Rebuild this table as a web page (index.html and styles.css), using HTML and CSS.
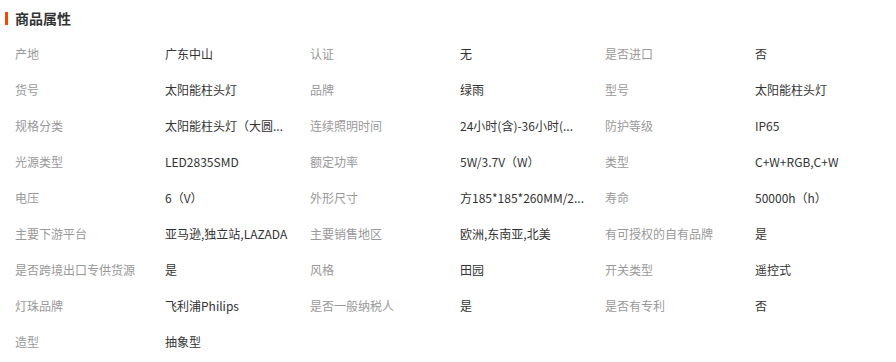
FILE: index.html
```html
<!DOCTYPE html>
<html lang="zh">
<head>
<meta charset="utf-8">
<link rel="stylesheet" href="styles.css">
</head>
<body>
<div class="attrs">
  <h3 class="attrs-title">商品属性</h3>
  <div class="attrs-grid">
    <div class="k">产地</div><div class="v">广东中山</div>
    <div class="k">认证</div><div class="v">无</div>
    <div class="k">是否进口</div><div class="v">否</div>

    <div class="k">货号</div><div class="v">太阳能柱头灯</div>
    <div class="k">品牌</div><div class="v">绿雨</div>
    <div class="k">型号</div><div class="v">太阳能柱头灯</div>

    <div class="k">规格分类</div><div class="v">太阳能柱头灯（大圆...</div>
    <div class="k">连续照明时间</div><div class="v">24小时(含)-36小时(...</div>
    <div class="k">防护等级</div><div class="v">IP65</div>

    <div class="k">光源类型</div><div class="v">LED2835SMD</div>
    <div class="k">额定功率</div><div class="v">5W/3.7V（W）</div>
    <div class="k">类型</div><div class="v">C+W+RGB,C+W</div>

    <div class="k">电压</div><div class="v">6（V）</div>
    <div class="k">外形尺寸</div><div class="v">方185*185*260MM/2...</div>
    <div class="k">寿命</div><div class="v">50000h（h）</div>

    <div class="k">主要下游平台</div><div class="v">亚马逊,独立站,LAZADA</div>
    <div class="k">主要销售地区</div><div class="v">欧洲,东南亚,北美</div>
    <div class="k">有可授权的自有品牌</div><div class="v">是</div>

    <div class="k">是否跨境出口专供货源</div><div class="v">是</div>
    <div class="k">风格</div><div class="v">田园</div>
    <div class="k">开关类型</div><div class="v">遥控式</div>

    <div class="k">灯珠品牌</div><div class="v">飞利浦Philips</div>
    <div class="k">是否一般纳税人</div><div class="v">是</div>
    <div class="k">是否有专利</div><div class="v">否</div>

    <div class="k">造型</div><div class="v">抽象型</div>
  </div>
</div>
</body>
</html>
```

FILE: styles.css
```css
* { box-sizing: border-box; }
html, body {
  margin: 0;
  padding: 0;
  background: #fff;
}
body {
  font-family: "Noto Sans CJK SC", "Noto Sans", "Liberation Sans", sans-serif;
  font-size: 12px;
  color: #333;
}
.attrs {
  width: 896px;
}
.attrs-title {
  position: relative;
  margin: 0;
  height: 36px;
  line-height: 37px;
  padding-left: 15px;
  font-size: 14px;
  font-weight: bold;
  color: #333;
}
.attrs-title::before {
  content: "";
  position: absolute;
  left: 5px;
  top: 12px;
  width: 3px;
  height: 13px;
  background: #ff4400;
}
.attrs-grid {
  display: grid;
  grid-template-columns: 150px 145px 150px 145px 150px 141px;
  grid-auto-rows: 36px;
  padding-left: 15px;
}
.k, .v {
  line-height: 36px;
  white-space: nowrap;
}
.k {
  color: #999;
}
.v {
  color: #333;
}
```
